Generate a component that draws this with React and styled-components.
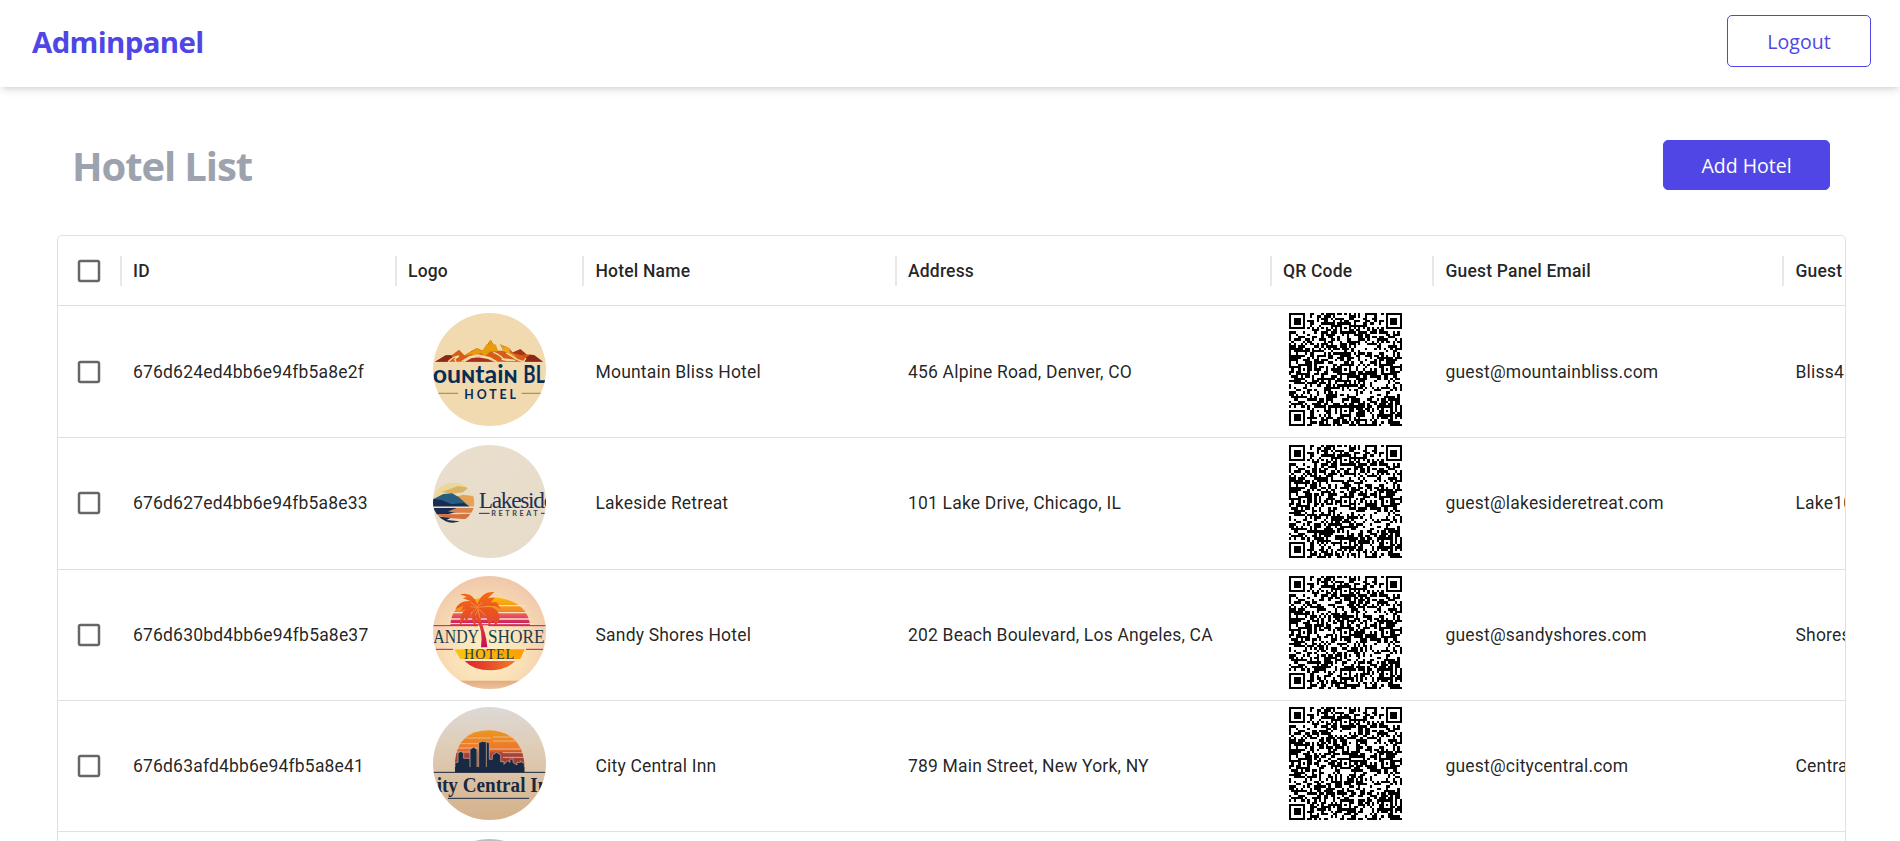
import React from 'react';
import styled, { createGlobalStyle } from 'styled-components';

const GlobalStyle = createGlobalStyle`
  * { box-sizing: border-box; }
  html, body { margin: 0; height: 841px; overflow: hidden; background: #fff; }
  body { font-family: 'Open Sans', 'Noto Sans', sans-serif; }
`;

const Page = styled.div`
  height: 841px;
  overflow: hidden;
  background: #fff;
`;

const Header = styled.header`
  display: flex;
  justify-content: space-between;
  align-items: flex-start;
  height: 87px;
  padding: 15px 29px 0 32px;
  background: #fff;
  box-shadow: 0 5px 7.5px -1.25px rgba(0, 0, 0, 0.1), 0 2.5px 5px -2.5px rgba(0, 0, 0, 0.1);
`;

const Brand = styled.div`
  margin-top: 5px;
  color: #4f46e5;
  font-size: 29.4px;
  font-weight: 700;
  line-height: 45px;
  letter-spacing: -0.65px;
`;

const Button = styled.button`
  display: flex;
  align-items: center;
  justify-content: center;
  width: ${(p) => p.$width}px;
  height: ${(p) => p.$height}px;
  padding: 2px 0 0;
  border: 1px solid #4f46e5;
  border-radius: 5px;
  background: ${(p) => (p.$filled ? '#4f46e5' : '#fff')};
  color: ${(p) => (p.$filled ? '#fff' : '#4f46e5')};
  font: 400 19.5px/28px 'Open Sans', 'Noto Sans', sans-serif;
  letter-spacing: ${(p) => p.$spacing};
`;

const TitleBar = styled.div`
  display: flex;
  justify-content: space-between;
  align-items: flex-start;
  height: 148px;
  padding: 53px 70px 0 72px;
`;

const Title = styled.h1`
  margin: -1px 0 0;
  color: #9ca3af;
  font-size: 40px;
  font-weight: 700;
  line-height: 54px;
  letter-spacing: -1.1px;
`;

const Grid = styled.section`
  width: 1789px;
  height: 700px;
  margin-left: 57px;
  overflow: hidden;
  border: 1px solid #e0e0e0;
  border-radius: 5px;
  background: #fff;
  font-family: Roboto, sans-serif;
  font-size: 17.5px;
  letter-spacing: 0.01071em;
  color: rgba(0, 0, 0, 0.87);
`;

const columns = '62.5px 275px 187.5px 312.5px 375px 162.5px 350px 275px';

const HeadRow = styled.div`
  display: grid;
  grid-template-columns: ${columns};
  width: 2000px;
  height: 70px;
  border-bottom: 1px solid #e0e0e0;
`;

const HeadCell = styled.div`
  display: flex;
  align-items: center;
  justify-content: space-between;
  padding-left: ${(p) => (p.$check ? 16.25 : 12.5)}px;
  font-weight: 500;
  white-space: nowrap;
`;

const Separator = styled.i`
  width: 2px;
  height: 30px;
  margin-right: -1px;
  background: #e8e8e8;
`;

const Row = styled.div`
  display: grid;
  grid-template-columns: ${columns};
  width: 2000px;
  height: 131.25px;
  border-top: 1px solid ${(p) => (p.$first ? 'transparent' : '#e0e0e0')};
`;

const Cell = styled.div`
  display: flex;
  align-items: center;
  padding-left: ${(p) => (p.$check ? 16.25 : 12.5)}px;
  white-space: nowrap;
`;

const ImageCell = styled.div`
  padding: 6.25px 0 0 ${(p) => p.$indent}px;
`;

const Picture = styled.svg`
  display: block;
  width: 113px;
  height: 113px;
  border-radius: ${(p) => (p.$round ? '50%' : '0')};
  letter-spacing: 0;
`;

const CheckIcon = styled.svg`
  width: 30px;
  height: 30px;
  fill: rgba(0, 0, 0, 0.6);
`;

const Checkbox = () => (
  <CheckIcon viewBox="0 0 24 24">
    <path d="M19 5v14H5V5h14m0-2H5c-1.1 0-2 .9-2 2v14c0 1.1.9 2 2 2h14c1.1 0 2-.9 2-2V5c0-1.1-.9-2-2-2z" />
  </CheckIcon>
);

const MountainLogo = () => (
  <Picture $round viewBox="39 24 339 339">
    <rect x="39" y="24" width="339" height="339" fill="#f1d9b0" />
    <path d="M45 170L78 151L96 150L117 134L133 151L170 129L188 137L212 104L233 137L250 137L240 118L268 130L279 143L302 132L319 148L342 150L369 170Z" fill="#d65d16" />
    <path d="M132 153L148 141L154 142L169 129L182 137L189 134L200 117L205 119L212 104L220 119L227 118L235 139L210 140L196 153L181 144L166 151L151 148Z" fill="#e79d0b" />
    <path d="M241 117L252 126L258 123L270 134L269 142L282 150L293 161L269 151L258 141L249 139Z" fill="#e9a51d" />
    <path d="M45 170L77 151L92 151L99 156L88 162L84 170Z" fill="#8b2918" />
    <path d="M132 170L153 158L176 156L198 161L220 170Z" fill="#a3311b" />
    <path d="M276 143L300 133L319 148L307 149L323 156L306 151Z" fill="#a3341b" />
    <path d="M314 170L317 158L330 149L343 151L369 170Z" fill="#8d2818" />
    <path d="M84 170L101 157L117 153L104 163L108 170M125 170L149 155L175 150L209 158L230 170L205 160L174 155L153 158L132 170M220 142Q240 149 250 162L286 166L260 166L245 163M259 144L292 164L311 170L318 159" fill="none" stroke="#f1d9b0" strokeWidth="4" />
    <g fill="#082d54" fontFamily="Lato, sans-serif" fontWeight="700">
      <text x="38" y="234" fontSize="77" textLength="255" lengthAdjust="spacingAndGlyphs">ouɴtaiɴ</text>
      <text x="310" y="234" fontSize="75" textLength="66" lengthAdjust="spacingAndGlyphs">BL</text>
      <text x="133" y="281" fontSize="37" textLength="155">HOTEL</text>
    </g>
    <path d="M54 265H114M305 265H363" stroke="#bd923b" strokeWidth="4" />
  </Picture>
);

const LakesideLogo = () => (
  <Picture $round viewBox="39 28 339 339">
    <defs>
      <clipPath id="lake"><ellipse cx="101" cy="201" rx="62" ry="60" /></clipPath>
      <linearGradient id="sand" x2="1" y2="1"><stop stopColor="#eadfce" /><stop offset="1" stopColor="#e7dbc9" /></linearGradient>
    </defs>
    <rect x="39" y="28" width="339" height="339" fill="url(#sand)" />
    <g clipPath="url(#lake)">
      <rect x="39" y="140" width="124" height="123" fill="#e9dcc5" />
      <path d="M39 140H140V156L118 155L80 167L65 177L39 187Z" fill="#ecd796" />
      <path d="M65 168L97 158L113 151L145 156L129 170L94 175Z" fill="#d9b467" />
      <path d="M105 183L130 177L163 182V213H130Z" fill="#e7a254" />
      <path d="M39 191L70 175L96 173L116 184L149 213H39Z" fill="#285c81" />
      <path d="M39 190L67 194L94 206L130 202L149 213H39Z" fill="#172c50" />
      <path d="M39 217H113L92 225L111 229L82 236H39Z" fill="#172c50" />
      <path d="M112 217H163L155 231H104L84 227Z" fill="#da814c" />
      <path d="M39 235L110 236L151 234L143 251L81 247Z" fill="#d7713d" />
      <path d="M39 240L91 247L80 253L119 257L83 266H39Z" fill="#192c4e" />
      <path d="M39 214H163" stroke="#e9dcc5" strokeWidth="3" />
    </g>
    <text x="176" y="216" fill="#203152" fontFamily="'Liberation Serif', serif" fontSize="70" textLength="226" lengthAdjust="spacing">Lakeside</text>
    <text x="214" y="240" fill="#3a4354" fontFamily="Lato, sans-serif" fontSize="22" fontWeight="700" textLength="139">RETREAT</text>
    <path d="M177 233H209M363 233H378" stroke="#263247" strokeWidth="3" />
  </Picture>
);

const SandyLogo = () => (
  <Picture $round viewBox="39 27 339 339">
    <defs>
      <radialGradient id="glow" cx=".48" cy=".64" r=".65"><stop stopColor="#fff0c4" /><stop offset=".5" stopColor="#fae0b7" /><stop offset="1" stopColor="#efc7aa" /></radialGradient>
      <linearGradient id="sunset" x1="0" x2="0" y1="94" y2="175" gradientUnits="userSpaceOnUse"><stop stopColor="#ffb400" /><stop offset=".45" stopColor="#f28b27" /><stop offset=".65" stopColor="#e64f67" /><stop offset="1" stopColor="#c61356" /></linearGradient>
      <linearGradient id="palm" x1="0" x2="0" y1="76" y2="240" gradientUnits="userSpaceOnUse"><stop stopColor="#f36a14" /><stop offset=".5" stopColor="#e74a28" /><stop offset="1" stopColor="#c90b5c" /></linearGradient>
      <linearGradient id="reflection" x2="1"><stop stopColor="#f9c314" /><stop offset="1" stopColor="#ff9d00" /></linearGradient>
      <linearGradient id="low"><stop stopColor="#db2430" /><stop offset="1" stopColor="#f67925" /></linearGradient>
      <linearGradient id="shore" x1="0" x2="0" y1="0" y2="1"><stop stopColor="#d89366" stopOpacity="0.7" /><stop offset="1" stopColor="#e3b08a" stopOpacity="0.6" /></linearGradient>
    </defs>
    <rect x="39" y="27" width="339" height="339" fill="url(#glow)" />
    <path d="M39 341H378V366H39Z" fill="url(#shore)" />
    <path d="M91 175Q94 116 153 99Q205 86 240 93Q323 108 330 175Z" fill="url(#sunset)" />
    <path d="M222 116H317M91 137H330M88 156H335M85 170H340" stroke="#fbdfbd" strokeWidth="4" />
    <path d="M169 155Q190 190 183 241H202Q199 199 179 152Z" fill="url(#palm)" />
    <path d="M172 113Q159 72 120 82L141 90L128 94L154 103Q120 98 106 127L131 116L123 132L151 119Q118 129 120 178L135 151L137 167L157 133Q153 161 165 179L171 151L178 180L185 143Q202 146 207 176L219 157L226 176Q250 154 230 130Q218 116 188 119Q220 111 242 126L230 106L211 106L225 92L203 94L223 75Q184 72 172 113Z" fill="url(#palm)" />
    <path d="M152 106L171 119L188 106M151 119L170 121L210 118M158 134L172 122L197 146M166 145L174 127L180 154" fill="none" stroke="#f8a557" strokeWidth="2" />
    <path d="M39 176H174M205 176H378M48 247H99M318 247H370" stroke="#c91559" strokeWidth="3" />
    <path d="M103 247H314L301 276H121Z" fill="url(#reflection)" />
    <path d="M134 282H286Q258 310 210 310Q161 310 134 282Z" fill="url(#low)" />
    <g fill="#193d51" fontFamily="'Liberation Serif', serif">
      <text x="40" y="227" fontSize="58" textLength="137" lengthAdjust="spacingAndGlyphs">ANDY</text>
      <text x="204" y="227" fontSize="58" textLength="170" lengthAdjust="spacingAndGlyphs">SHORE</text>
      <text x="132" y="275" fontSize="43" textLength="151">HOTEL</text>
    </g>
  </Picture>
);

const CityLogo = () => (
  <Picture $round viewBox="39 27 339 339">
    <defs>
      <linearGradient id="paper" x1="0" x2="0" y1="0" y2="1"><stop stopColor="#ddd9d6" /><stop offset=".35" stopColor="#dfcdb7" /><stop offset="1" stopColor="#d4b18b" /></linearGradient>
      <linearGradient id="citysun" x1="0" x2="0" y1="97" y2="222" gradientUnits="userSpaceOnUse"><stop stopColor="#ed961e" /><stop offset=".45" stopColor="#ec762c" /><stop offset=".56" stopColor="#ac4138" /><stop offset="1" stopColor="#873d3e" /></linearGradient>
    </defs>
    <rect x="39" y="27" width="339" height="339" fill="url(#paper)" />
    <path d="M105 222V190Q113 98 208 97Q303 102 313 195V222Z" fill="url(#citysun)" />
    <path d="M132 120H213M219 117H281M112 137H177M219 129H286M110 150H175M206 153H300M108 162H164M248 164H311M249 178H313" stroke="#ebc4a0" strokeWidth="2.4" />
    <path d="M105 222V193H114V165L123 160L131 166V181H150V154L161 148L171 154V222Z" fill="#192944" stroke="#dfb893" strokeWidth="2" />
    <path d="M176 222V134L188 130L208 134V184H217V171L230 163L242 171V191H252V199L263 188L270 193V184L279 182V193L291 201V193H301V189L313 197V222Z" fill="#192944" stroke="#dfb893" strokeWidth="2" />
    <path d="M199 134V218M150 181V217" stroke="#e2c3a2" strokeWidth="2" />
    <path d="M105 207H313V223H105Z" fill="#192944" />
    <path d="M39 223H378M84 301H327" stroke="#17253c" strokeWidth="3" />
    <text x="50" y="281" fill="#182841" fontFamily="'Liberation Serif', serif" fontSize="60" fontWeight="700" textLength="367" lengthAdjust="spacingAndGlyphs">ity Central Inn</text>
  </Picture>
);

const GrayLogo = () => (
  <Picture $round viewBox="0 0 113 113"><circle cx="56.5" cy="57" r="56" fill="#bdbdbd" /></Picture>
);

const QR_SIZE = 49;

function inFinder(x, y) {
  const fx = x < 8 ? x : x > 40 && y < 8 ? x - 42 : null;
  const fy = y < 8 ? y : y > 40 && x < 8 ? y - 42 : null;
  if (fx === null || fy === null) return null;
  if (fx < 0 || fy < 0 || fx > 6 || fy > 6) return false;
  const d = Math.max(Math.abs(fx - 3), Math.abs(fy - 3));
  return d !== 2;
}

function qrPath(seed) {
  let state = 8713;
  let variant = seed * 7919 + 17;
  let path = '';
  const centers = [[24, 6], [6, 24], [24, 24], [42, 24], [24, 42], [42, 42]];
  for (let y = 0; y < QR_SIZE; y += 1) {
    for (let x = 0; x < QR_SIZE; x += 1) {
      state = (state * 48271) % 2147483647;
      variant = (variant * 48271) % 2147483647;
      const finder = inFinder(x, y);
      const center = centers.find(([a, b]) => Math.abs(x - a) < 3 && Math.abs(y - b) < 3);
      let dark = state / 2147483647 < 0.52;
      if (x > 10 && x < 34 && y > 8 && variant / 2147483647 < 0.3) dark = !dark;
      if (x === 6 || y === 6) dark = (x + y) % 2 === 0;
      if (center) dark = Math.max(Math.abs(x - center[0]), Math.abs(y - center[1])) !== 1;
      if (finder !== null) dark = finder;
      if (dark) path += `M${x} ${y}h1v1h-1z`;
    }
  }
  return path;
}

const QrCode = ({ seed }) => (
  <Picture viewBox="0 0 49 49" shapeRendering="crispEdges"><path d={qrPath(seed)} fill="#000" /></Picture>
);

const headings = ['ID', 'Logo', 'Hotel Name', 'Address', 'QR Code', 'Guest Panel Email', 'Guest Panel Password'];

const hotels = [
  { id: '676d624ed4bb6e94fb5a8e2f', Logo: MountainLogo, name: 'Mountain Bliss Hotel', address: '456 Alpine Road, Denver, CO', email: 'guest@mountainbliss.com', password: 'Bliss456' },
  { id: '676d627ed4bb6e94fb5a8e33', Logo: LakesideLogo, name: 'Lakeside Retreat', address: '101 Lake Drive, Chicago, IL', email: 'guest@lakesideretreat.com', password: 'Lake101' },
  { id: '676d630bd4bb6e94fb5a8e37', Logo: SandyLogo, name: 'Sandy Shores Hotel', address: '202 Beach Boulevard, Los Angeles, CA', email: 'guest@sandyshores.com', password: 'Shores202' },
  { id: '676d63afd4bb6e94fb5a8e41', Logo: CityLogo, name: 'City Central Inn', address: '789 Main Street, New York, NY', email: 'guest@citycentral.com', password: 'Central789' },
];

export default function App() {
  return (
    <Page>
      <GlobalStyle />
      <Header>
        <Brand>Adminpanel</Brand>
        <Button $width={144} $height={52} $spacing="0.05px">Logout</Button>
      </Header>
      <TitleBar>
        <Title>Hotel List</Title>
        <Button $filled $width={167} $height={50} $spacing="0">Add Hotel</Button>
      </TitleBar>
      <Grid>
        <HeadRow>
          <HeadCell $check><Checkbox /><Separator /></HeadCell>
          {headings.map((label) => <HeadCell key={label}>{label}<Separator /></HeadCell>)}
        </HeadRow>
        {hotels.map((hotel, index) => (
          <Row key={hotel.id} $first={index === 0}>
            <Cell $check><Checkbox /></Cell>
            <Cell>{hotel.id}</Cell>
            <ImageCell $indent={37.5}><hotel.Logo /></ImageCell>
            <Cell>{hotel.name}</Cell>
            <Cell>{hotel.address}</Cell>
            <ImageCell $indent={18.75}><QrCode seed={index + 1} /></ImageCell>
            <Cell>{hotel.email}</Cell>
            <Cell>{hotel.password}</Cell>
          </Row>
        ))}
        <Row>
          <Cell />
          <Cell />
          <ImageCell $indent={37.5}><GrayLogo /></ImageCell>
        </Row>
      </Grid>
    </Page>
  );
}
